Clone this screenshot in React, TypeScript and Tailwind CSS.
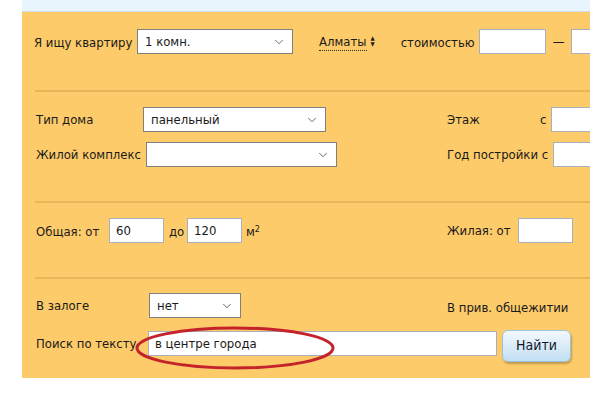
import { ChevronDown } from 'lucide-react';

const font = { fontFamily: '"DejaVu Sans Condensed", "DejaVu Sans", Tahoma, sans-serif' };

function Select({ value, width }: { value: string; width: string }) {
  return (
    <div className={`flex h-[25px] shrink-0 items-center justify-between border border-[#7f7f7f] bg-white pl-[7px] pr-[6px] ${width}`}>
      <span>{value}</span>
      <ChevronDown className="h-[14px] w-[14px] text-[#555]" strokeWidth={1.5} />
    </div>
  );
}

function Input({ value, width }: { value?: string; width: string }) {
  return (
    <div className={`flex h-[25px] shrink-0 items-center border border-[#a9b0ba] bg-white pl-[6px] ${width}`}>
      {value}
    </div>
  );
}

export default function App() {
  return (
    <div className="h-[393px] w-[590px] overflow-hidden whitespace-nowrap bg-white text-[13px] text-[#1a1a1a]" style={font}>
      <div className="ml-[22px] h-[12px] border-b border-[#cfdde6] bg-[#e9f5fc]" />
      <div className="relative ml-[22px] h-[366px] bg-[#fecb6a] pl-[13px]">
        {/* Section 1 */}
        <div className="flex h-[80px] items-start border-b-2 border-[#e9b55b] pt-[17px]">
          <span className="ml-[-1px] mt-[4px] w-[103px] shrink-0">Я ищу квартиру</span>
          <Select value="1 комн." width="w-[156px]" />
          <span className="ml-[26px] mt-[4px] shrink-0 border-b border-dotted border-[#333] leading-[17px]">Алматы</span>
          <span className="ml-[4px] mt-[6px] flex shrink-0 flex-col text-[6px] leading-[6px]">
            <span>▲</span>
            <span>▼</span>
          </span>
          <span className="ml-[26px] mt-[4px] w-[78px] shrink-0">стоимостью</span>
          <Input width="w-[67px]" />
          <span className="mx-[7px] mt-[3px] shrink-0">—</span>
          <Input width="w-[40px]" />
        </div>

        {/* Section 2 */}
        <div className="flex h-[111px] border-b-2 border-[#e9b55b] pt-[15px]">
          <div className="flex w-[412px] shrink-0 flex-col gap-[10px]">
            <div className="flex items-center">
              <span className="w-[108px] shrink-0 pl-[1px]">Тип дома</span>
              <Select value="панельный" width="w-[183px]" />
            </div>
            <div className="flex items-center">
              <span className="w-[111px] shrink-0 pl-[1px]">Жилой комплекс</span>
              <Select value="" width="w-[191px]" />
            </div>
          </div>
          <div className="flex shrink-0 flex-col gap-[10px]">
            <div className="flex items-center">
              <span className="w-[93px] shrink-0">Этаж</span>
              <span className="w-[11px] shrink-0">с</span>
              <Input width="w-[60px]" />
            </div>
            <div className="flex items-center">
              <span className="w-[106px] shrink-0">Год постройки с</span>
              <Input width="w-[60px]" />
            </div>
          </div>
        </div>

        {/* Section 3 */}
        <div className="flex h-[76px] border-b-2 border-[#e9b55b] pt-[15px]">
          <div className="flex w-[412px] shrink-0 items-start">
            <span className="mt-[4px] w-[74px] shrink-0 pl-[1px]">Общая: от</span>
            <Input value="60" width="w-[55px]" />
            <span className="mt-[4px] w-[23px] shrink-0 pl-[5px]">до</span>
            <Input value="120" width="w-[55px]" />
            <span className="ml-[4px] mt-[4px] shrink-0">
              м<sup className="text-[9px]">2</sup>
            </span>
          </div>
          <div className="flex shrink-0 items-center self-start">
            <span className="w-[71px] shrink-0">Жилая: от</span>
            <Input width="w-[55px]" />
          </div>
        </div>

        {/* Section 4 */}
        <div className="flex pt-[14px]">
          <div className="flex w-[412px] shrink-0 flex-col gap-[13px]">
            <div className="flex items-center">
              <span className="w-[114px] shrink-0 pl-[1px]">В залоге</span>
              <Select value="нет" width="w-[92px]" />
            </div>
            <div className="flex items-center">
              <span className="w-[113px] shrink-0 pl-[1px]">Поиск по тексту</span>
              <Input value="в центре города" width="w-[349px]" />
            </div>
          </div>
          <div className="flex shrink-0 flex-col">
            <span className="mt-[5px]">В прив. общежитии</span>
            <button className="ml-[55px] mt-[12px] h-[32px] w-[69px] rounded-[6px] border border-[#9cc3de] bg-gradient-to-b from-[#f3f9fd] to-[#c2dff3] text-[14px] text-[#14142a] shadow-[1px_2px_2px_rgba(120,90,40,0.45)]">
              Найти
            </button>
          </div>
        </div>

        <svg className="absolute left-[112px] top-[313px]" width="202" height="46" viewBox="0 0 202 46">
          <ellipse cx="101" cy="23" rx="98" ry="20" fill="none" stroke="#c4232b" strokeWidth="3" />
        </svg>
      </div>
    </div>
  );
}
